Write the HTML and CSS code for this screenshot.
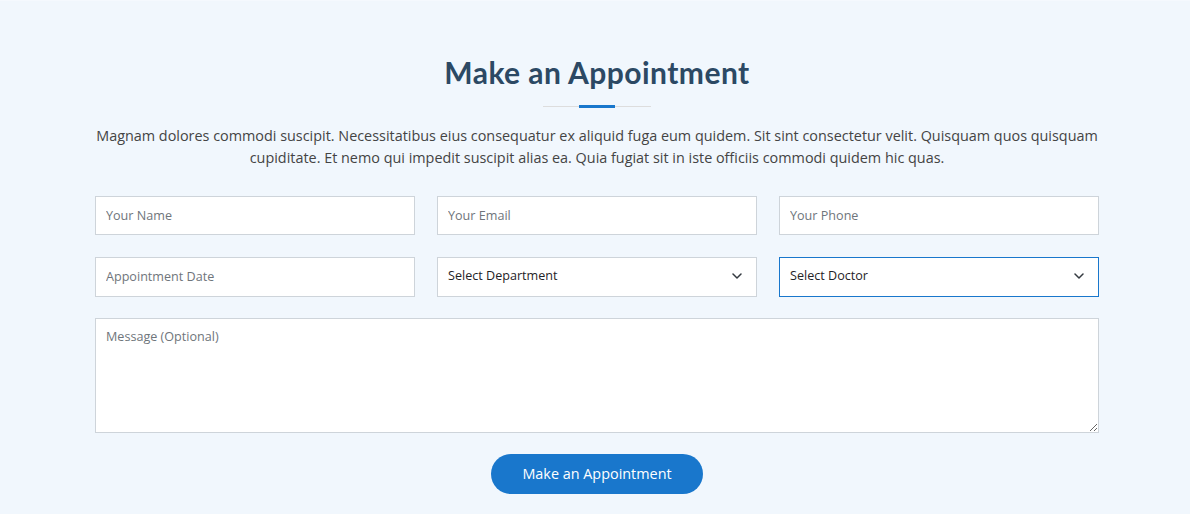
FILE: index.html
```html
<!DOCTYPE html>
<html lang="en">
<head>
<meta charset="utf-8">
<title>Make an Appointment</title>
<link rel="stylesheet" href="styles.css">
</head>
<body>
<section class="appointment">
  <div class="container">
    <div class="section-title">
      <h2>Make an Appointment</h2>
      <p>Magnam dolores commodi suscipit. Necessitatibus eius consequatur ex aliquid fuga eum quidem. Sit sint consectetur velit. Quisquam quos quisquam cupiditate. Et nemo qui impedit suscipit alias ea. Quia fugiat sit in iste officiis commodi quidem hic quas.</p>
    </div>
    <form class="form">
      <div class="row row-1">
        <input class="field" type="text" placeholder="Your Name">
        <input class="field" type="email" placeholder="Your Email">
        <input class="field" type="tel" placeholder="Your Phone">
      </div>
      <div class="row row-2">
        <input class="field date" type="text" placeholder="Appointment Date">
        <div class="select-wrap">
          <select class="field select"><option>Select Department</option></select>
          <svg class="chev" width="10" height="6" viewBox="0 0 10 6"><path d="M1 1l4 4 4-4" fill="none" stroke="#343a40" stroke-width="1.5" stroke-linecap="round" stroke-linejoin="round"/></svg>
        </div>
        <div class="select-wrap">
          <select class="field select focus"><option>Select Doctor</option></select>
          <svg class="chev" width="10" height="6" viewBox="0 0 10 6"><path d="M1 1l4 4 4-4" fill="none" stroke="#343a40" stroke-width="1.5" stroke-linecap="round" stroke-linejoin="round"/></svg>
        </div>
      </div>
      <textarea class="field message" placeholder="Message (Optional)"></textarea>
      <div class="actions">
        <button type="button" class="btn">Make an Appointment</button>
      </div>
    </form>
  </div>
</section>
</body>
</html>
```

FILE: styles.css
```css
* { box-sizing: border-box; }
html, body { margin: 0; padding: 0; }
body {
  background: #f1f7fd;
  font-family: "Open Sans", "Liberation Sans", sans-serif;
  color: #444;
}
.appointment {
  padding: 54px 0 20px;
  border-top: 1px solid #f5f9fe;
}
.container {
  width: 1004px;
  margin-left: 95px;
}
.section-title { text-align: center; }
.section-title h2 {
  position: relative;
  display: block;
  margin: -1px 0 0;
  padding-bottom: 18px;
  font-family: "Lato", "Open Sans", sans-serif;
  font-weight: 700;
  font-size: 30px;
  line-height: 36px;
  color: #2c4964;
  letter-spacing: 0.45px;
}
.section-title h2::before {
  content: "";
  position: absolute;
  left: 50%;
  bottom: 1px;
  width: 108px;
  height: 1px;
  margin-left: -54px;
  background: #dddddd;
}
.section-title h2::after {
  content: "";
  position: absolute;
  left: 50%;
  bottom: 0;
  width: 36px;
  height: 3px;
  margin-left: -18px;
  background: #1977cc;
}
.section-title p {
  margin: 17px 0 0;
  font-size: 14.4px;
  line-height: 21.5px;
  color: #444;
}
.form { margin-top: 28px; }
.row {
  display: grid;
  grid-template-columns: repeat(3, 320px);
  column-gap: 22px;
}
.row-1 { height: 39px; }
.row-2 { margin-top: 22px; height: 40px; }
.field {
  display: block;
  width: 100%;
  height: 100%;
  margin: 0;
  padding: 0 10px;
  border: 1px solid #ced4da;
  border-radius: 0;
  background: #fff;
  font-family: "Open Sans", "Liberation Sans", sans-serif;
  font-size: 12.6px;
  color: #212529;
  outline: none;
}
.field::placeholder { color: #6f757b; opacity: 1; }
.date { padding-bottom: 1px; }
.select-wrap { position: relative; height: 40px; }
.select {
  appearance: none;
  -webkit-appearance: none;
  padding-bottom: 3px;
  color: #1f2327;
}
.select.focus { border-color: #1977cc; }
.chev {
  position: absolute;
  right: 15px;
  top: 16px;
  pointer-events: none;
}
.message {
  margin-top: 21px;
  height: 115px;
  padding: 8px 10px;
  resize: vertical;
  line-height: 20px;
}
.actions {
  display: flex;
  justify-content: center;
  margin-top: 21px;
}
.btn {
  width: 212px;
  height: 40px;
  padding: 0 0 2px;
  border: 0;
  border-radius: 50px;
  background: #1977cc;
  color: #fff;
  font-family: "Open Sans", "Liberation Sans", sans-serif;
  font-size: 14.4px;
  cursor: pointer;
}
```
